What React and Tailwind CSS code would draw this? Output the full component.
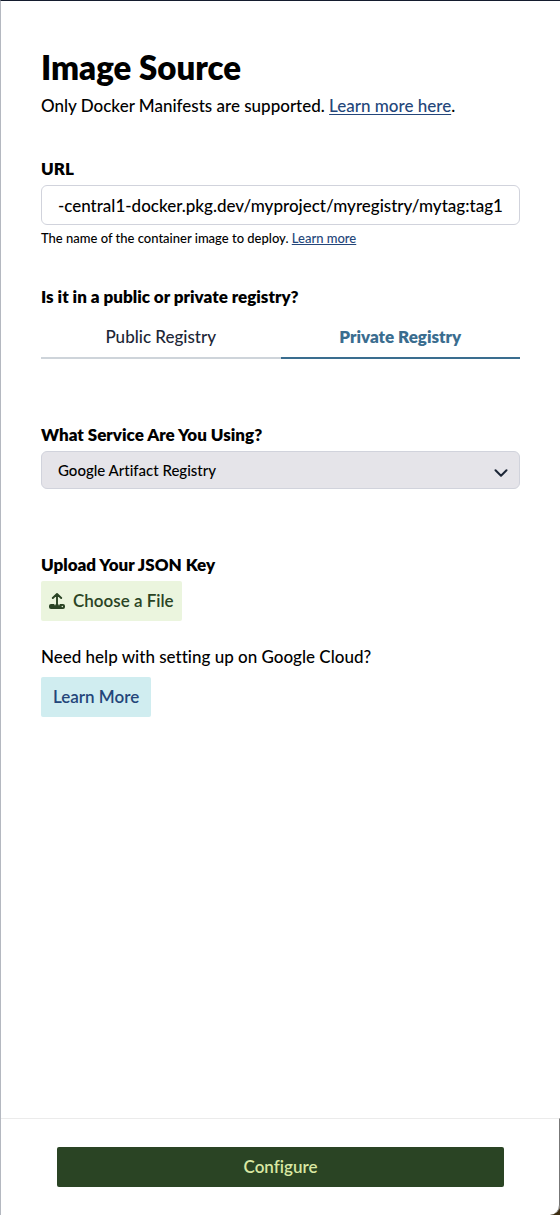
import React, { useEffect, useRef, useState } from "react";

const SERVICES = ["Google Artifact Registry", "Docker Hub", "GitHub Container Registry"];

export default function App() {
    const [url, setUrl] = useState("us-central1-docker.pkg.dev/myproject/myregistry/mytag:tag1");
    const [registry, setRegistry] = useState("private");
    const [service, setService] = useState(SERVICES[0]);
    const urlRef = useRef(null);
    const fileRef = useRef(null);

    // Long image names: keep the tag at the end in view
    useEffect(() => {
        urlRef.current.scrollLeft = urlRef.current.scrollWidth;
    }, []);

    return (
        <div className="min-h-screen flex bg-[#3d2c10] font-['Lato',sans-serif] font-medium text-black [font-variant-ligatures:none]">
            <div className="flex-1 min-w-0 flex flex-col bg-white border-t border-t-[#141c2e] border-l border-l-[#b4b8c0] rounded-br-[10px]">
                <main className="flex-1 px-10 pt-[46px]">
                    <h1 className="text-[33px] leading-10 font-extrabold">Image Source</h1>
                    <p className="mt-[7px] text-[17px] leading-6">
                        Only Docker Manifests are supported.{" "}
                        <a href="#manifests" className="text-[#24467a] underline underline-offset-2">Learn more here</a>.
                    </p>

                    <div className="mt-[39px]">
                        <label htmlFor="url" className="block text-[17px] leading-6 font-extrabold">URL</label>
                        <input
                            id="url"
                            ref={urlRef}
                            type="text"
                            value={url}
                            onChange={(e) => setUrl(e.target.value)}
                            className="mt-1 block w-full h-10 px-4 text-[17px] bg-white border border-[#d1d3dc] rounded-md"
                        />
                        <p className="mt-1 text-[13px] leading-[18px]">
                            The name of the container image to deploy.{" "}
                            <a href="#image" className="text-[#24467a] underline">Learn more</a>
                        </p>
                    </div>

                    <div className="mt-[38px]">
                        <h2 id="registry-label" className="text-[17px] leading-6 font-extrabold">Is it in a public or private registry?</h2>
                        <div role="tablist" aria-labelledby="registry-label" className="mt-2 grid grid-cols-2">
                            <Tab label="Public Registry" active={registry === "public"} onClick={() => setRegistry("public")} />
                            <Tab label="Private Registry" active={registry === "private"} onClick={() => setRegistry("private")} />
                        </div>
                    </div>

                    <div className="mt-16">
                        <label htmlFor="service" className="block text-[17px] leading-6 font-extrabold">What Service Are You Using?</label>
                        <div className="mt-1 relative">
                            <select
                                id="service"
                                value={service}
                                onChange={(e) => setService(e.target.value)}
                                className="block w-full h-[38px] px-4 text-[15px] appearance-none bg-[#e5e4e9] border border-[#d1d3dc] rounded-md"
                            >
                                {SERVICES.map((s) => <option key={s}>{s}</option>)}
                            </select>
                            <svg viewBox="0 0 14 8" className="absolute right-3 top-[18px] w-3.5 h-2 pointer-events-none" fill="none" stroke="#1c2636" strokeWidth="2" strokeLinecap="round" strokeLinejoin="round">
                                <path d="M1.5 1.2 7 6.7 12.5 1.2" />
                            </svg>
                        </div>
                    </div>

                    <div className="mt-16">
                        <label htmlFor="key" className="block text-[17px] leading-6 font-extrabold">Upload Your JSON Key</label>
                        <input id="key" ref={fileRef} type="file" accept=".json" className="hidden" />
                        <button
                            type="button"
                            onClick={() => fileRef.current.click()}
                            className="mt-1 h-10 px-2 flex items-center gap-2 bg-[#ebf5de] text-[#2a4424] text-[17px] font-semibold rounded-xs"
                        >
                            <UploadIcon />
                            Choose a File
                        </button>
                    </div>

                    <div className="mt-6 pb-10">
                        <p className="text-[17px] leading-6">Need help with setting up on Google Cloud?</p>
                        <a href="#google-cloud" className="mt-2 h-10 px-3 inline-flex items-center bg-[#d0edf0] text-[#24467a] text-[17px] font-semibold rounded-xs">
                            Learn More
                        </a>
                    </div>
                </main>

                <footer className="pl-14 pr-[55px] py-7 border-t border-t-[#ebebeb] border-r border-r-[#777777] rounded-br-[10px]">
                    <button type="button" className="block w-full h-10 bg-[#2a4424] text-[#d9e8a3] text-[17px] font-semibold rounded-xs">
                        Configure
                    </button>
                </footer>
            </div>
        </div>
    );
}

function Tab({ label, active, onClick }) {
    return (
        <button
            type="button"
            role="tab"
            aria-selected={active}
            onClick={onClick}
            className={`h-[42px] border-b-2 text-[17px] ${active ? "border-[#3a6d8f] text-[#3a6d8f] font-extrabold" : "border-[#ced4da] text-[#1c2636]"}`}
        >
            {label}
        </button>
    );
}

function UploadIcon() {
    return (
        <svg viewBox="0 0 16 16" className="w-4 h-4" fill="none" stroke="currentColor" strokeLinecap="round" strokeLinejoin="round">
            <path d="M8 11.5V1.2M3.8 5 8 1l4.2 4" strokeWidth="1.9" />
            <path d="M2 11h12a2 2 0 0 1 2 2v1a2 2 0 0 1-2 2H2a2 2 0 0 1-2-2v-1a2 2 0 0 1 2-2Z" fill="currentColor" stroke="none" />
            <path d="M6 10.5v1.2M10 10.5v1.2" stroke="#ebf5de" strokeWidth="1.2" />
            <circle cx="13.3" cy="13.5" r=".7" fill="#ebf5de" stroke="none" />
        </svg>
    );
}
